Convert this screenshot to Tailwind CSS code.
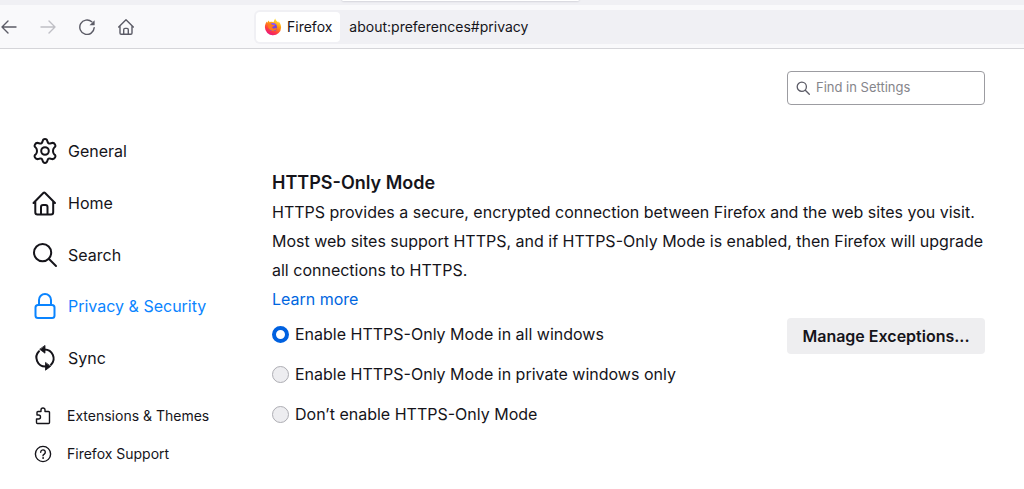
<!doctype html>
<html lang="en">

<head>
    <meta charset="UTF-8">
    <meta name="viewport" content="width=device-width, initial-scale=1.0">
    <title>Settings</title>
    <script src="https://cdn.jsdelivr.net/npm/@tailwindcss/browser@4"></script>
</head>

<body class="min-h-screen overflow-x-hidden bg-white text-[#15141a] font-['Inter','Liberation_Sans',sans-serif]">
    <!-- Tab strip -->
    <div class="h-[5px] bg-[#f0f0f4] pl-[342px]">
        <div class="h-px w-[237px] rounded-b-sm bg-white shadow-[0_0_2px_#8f8f9d]"></div>
    </div>

    <!-- Toolbar -->
    <header class="flex h-11 items-center border-b border-[#d5d5d9] bg-[#f9f9fb]">
        <nav class="flex w-[254px] shrink-0 gap-[23px] pl-px text-[#5b5b66]">
            <button aria-label="Back">
                <svg class="size-4" viewBox="0 0 16 16" fill="none" stroke="currentColor" stroke-width="1.4" stroke-linecap="round" stroke-linejoin="round"><path d="M15 8H1M7 2 1 8l6 6" /></svg>
            </button>
            <button aria-label="Forward" class="text-[#bfbfc5]">
                <svg class="size-4" viewBox="0 0 16 16" fill="none" stroke="currentColor" stroke-width="1.4" stroke-linecap="round" stroke-linejoin="round"><path d="M1 8h14M9 2l6 6-6 6" /></svg>
            </button>
            <button aria-label="Reload">
                <svg class="size-4" viewBox="0 0 16 16" fill="none" stroke="currentColor" stroke-width="1.4" stroke-linecap="round"><path d="M15.2 8.6A7.2 7.2 0 1 1 12.8 2.8" /><path d="M15.6 1.2v4.6a.5.5 0 0 1-.5.5h-4.6z" fill="currentColor" stroke="none" /></svg>
            </button>
            <button aria-label="Home">
                <svg class="size-4" viewBox="0 0 16 16" fill="none" stroke="currentColor" stroke-width="1.4" stroke-linecap="round" stroke-linejoin="round"><path d="M.7 8 8 .8 15.3 8M2 7v7.1a1.2 1.2 0 0 0 1.2 1.2h9.6a1.2 1.2 0 0 0 1.2-1.2V7M5.7 15v-4.3A1.3 1.3 0 0 1 7 9.4h2a1.3 1.3 0 0 1 1.3 1.3V15" /></svg>
            </button>
        </nav>
        <div class="flex h-[34px] min-w-0 flex-1 items-center rounded-l-md bg-[#f0f0f4] pl-[2px] text-sm">
            <button class="flex h-[30px] shrink-0 items-center gap-[5px] rounded bg-white px-2">
                <svg class="size-[18px]" viewBox="0 0 18 18">
                    <defs>
                        <linearGradient id="flame" x1=".8" y1="0" x2=".3" y2="1">
                            <stop offset="0" stop-color="#fff44f" />
                            <stop offset=".4" stop-color="#ff980e" />
                            <stop offset=".75" stop-color="#ff3647" />
                            <stop offset="1" stop-color="#e31587" />
                        </linearGradient>
                    </defs>
                    <path d="M11.2.5c.7 2.3 2.1 2.7 3.2 4.1.2-.6.1-1 0-1.4 1.7 1.6 2.7 3.9 2.7 6.2A8.1 8.1 0 0 1 9 17.300 8.1 8.1 0 0 1 .9 9.300c0-2.300.7-4.200 1.900-5.800 0 .6.1 1 .4 1.300.4-1 1-1.700 1.800-2.200 0 .7.2 1.200.6 1.600 1.200-.5 2.600-.6 3.900 0 .5-1.500.9-2.600 1.700-3.700z" fill="url(#flame)" />
                    <circle cx="9" cy="9.2" r="3.9" fill="#7542e5" />
                    <path d="M4.8 6c1.400-.4 2.600-.2 3.700.7L11 7c-.4 1.200-1.500 1.200-2.500 1.700-.7.6.1 1.800 1.400 1.800 1.200.1 2-.7 3-.4-.6 1.800-2.200 2.900-4.200 2.800C6 12.700 4.200 10.300 4 8.300z" fill="#ff7b1c" />
                    <path d="M7 5.200c2.300-.8 4.800.3 5.600 2.200-1-.8-1.800-.8-2.700-.6L8.400 6.500z" fill="#9059ff" />
                </svg>
                Firefox
            </button>
            <input type="text" aria-label="Address" value="about:preferences#privacy" class="min-w-0 flex-1 px-[9px] outline-none">
        </div>
    </header>

    <div class="flex pt-[22px] pr-[39px] pl-8">
        <!-- Categories -->
        <nav class="w-[240px] shrink-0 pt-[54px]">
            <ul class="text-base">
                <li><a href="#general" class="flex h-[52px] items-center gap-[10px]">
                    <svg class="size-[26px]" viewBox="0 0 26 26" fill="none" stroke="currentColor" stroke-width="2" stroke-linejoin="round">
                        <circle cx="13" cy="13" r="3.8" />
                        <path d="M10.6 3.3Q11 1 13 1T15.4 3.3C15.8 5.3 17 6 19 5.2Q21.8 4.2 23 6.4T22.2 9.6C20.6 11.2 20.6 14.8 22.2 16.4Q24.2 17.4 23 19.6T19 20.8C17 20 15.8 20.7 15.4 22.7Q15 25 13 25T10.6 22.7C10.2 20.7 9 20 7 20.8Q4.2 21.8 3 19.6T3.8 16.4C5.4 14.8 5.4 11.2 3.8 9.6Q1.8 8.6 3 6.4T7 5.2C9 6 10.2 5.3 10.6 3.3Z" />
                    </svg>
                    General</a></li>
                <li><a href="#home" class="flex h-[52px] items-center gap-[10px]">
                    <svg class="size-[26px]" viewBox="0 0 26 26" fill="none" stroke="currentColor" stroke-width="2" stroke-linecap="round" stroke-linejoin="round"><path d="M1.500 13 11.300 3a1.300 1.300 0 0 1 1.800 0l9.900 10M3.300 11.500v10.700a2.200 2.200 0 0 0 2.200 2.200h13.500a2.200 2.200 0 0 0 2.200-2.200V11.500M9 24v-7a2 2 0 0 1 2-2h2.500a2 2 0 0 1 2 2v7" /></svg>
                    Home</a></li>
                <li><a href="#search" class="flex h-[51px] items-center gap-[10px]">
                    <svg class="size-[26px]" viewBox="0 0 26 26" fill="none" stroke="currentColor" stroke-width="2" stroke-linecap="round"><circle cx="10.6" cy="10.6" r="8.6" /><path d="m17 17 7 7" /></svg>
                    Search</a></li>
                <li><a href="#privacy" class="flex h-[52px] items-center gap-[10px] text-[#0a84ff]">
                    <svg class="size-[26px]" viewBox="0 0 26 26" fill="none" stroke="currentColor" stroke-width="2" stroke-linecap="round"><rect x="3.5" y="12" width="19" height="13" rx="2.500" /><path d="M7 12V7a6 6 0 0 1 12 0v5" /></svg>
                    Privacy &amp; Security</a></li>
                <li><a href="#sync" class="flex h-[51px] items-center gap-[10px]">
                    <svg class="size-[26px]" viewBox="0 0 26 26" fill="none" stroke="currentColor" stroke-width="2" stroke-linecap="round"><path d="M7 6.200A9 9 0 0 0 13.500 21.500M12.500 4.500A9 9 0 0 1 19 19.800" /><path d="M13 .8v7.400L8 4.500zM13.500 17.800v7.400l5-3.700z" fill="currentColor" stroke-width=".8" stroke-linejoin="round" /></svg>
                    Sync</a></li>
            </ul>
            <ul class="mt-[14px] text-sm">
                <li><a href="#addons" class="flex h-[38px] items-center gap-[15px] pl-[2px]">
                    <svg class="size-[18px]" viewBox="0 0 18 18" fill="none" stroke="currentColor" stroke-width="1.4" stroke-linejoin="round"><path d="M3.500 16.500h11a1 1 0 0 0 1-1V5.500a1 1 0 0 0-1-1h-3.500V3a2 2 0 0 0-4 0v1.500H4a1 1 0 0 0-1 1V8h1.500a2 2 0 0 1 0 4H2.500v3.500a1 1 0 0 0 1 1z" /></svg>
                    Extensions &amp; Themes</a></li>
                <li><a href="#support" class="flex h-[38px] items-center gap-[15px] pl-[2px]">
                    <svg class="size-[18px]" viewBox="0 0 18 18" fill="none" stroke="currentColor" stroke-width="1.4" stroke-linecap="round"><circle cx="9" cy="9" r="7.6" /><path d="M6.700 7.200a2.300 2.300 0 1 1 3.600 1.900c-.8.5-1.300.8-1.300 1.600" /><circle cx="9" cy="13" r=".4" fill="currentColor" stroke-width="1" /></svg>
                    Firefox Support</a></li>
            </ul>
        </nav>

        <!-- Pane -->
        <main class="min-w-0 flex-1">
            <label class="ml-auto flex h-[34px] w-[198px] items-center gap-[6px] rounded border border-[#9c9ca1] px-2">
                <svg class="size-[14px] shrink-0 text-[#5b5b66]" viewBox="0 0 14 14" fill="none" stroke="currentColor" stroke-width="1.3" stroke-linecap="round"><circle cx="5.8" cy="5.8" r="4.6" /><path d="m9.300 9.300 4 4" /></svg>
                <input type="search" aria-label="Find in Settings" placeholder="Find in Settings" class="w-full min-w-0 text-[13px] outline-none placeholder:text-[#85858b]">
            </label>

            <h1 class="mt-[62px] text-lg leading-[31px] font-semibold">HTTPS-Only Mode</h1>
            <p class="text-base leading-[29px]">HTTPS provides a secure, encrypted connection between Firefox and the web sites you visit. Most web sites support HTTPS, and if HTTPS-Only Mode is enabled, then Firefox will upgrade all connections to HTTPS.</p>
            <a href="#learn" class="block w-fit text-base leading-[29px] text-[#0066e0]">Learn more</a>

            <div class="mt-1 flex items-start justify-between text-base">
                <fieldset class="flex flex-col gap-4 pt-1">
                    <label class="flex h-6 items-center gap-[6px]">
                        <input type="radio" name="mode" checked class="size-[17px] appearance-none rounded-full border border-[#adadb3] bg-[#ededf0] checked:border-4 checked:border-[#0061e0] checked:bg-white">
                        Enable HTTPS-Only Mode in all windows
                    </label>
                    <label class="flex h-6 items-center gap-[6px]">
                        <input type="radio" name="mode" class="size-[17px] appearance-none rounded-full border border-[#adadb3] bg-[#ededf0] checked:border-4 checked:border-[#0061e0] checked:bg-white">
                        Enable HTTPS-Only Mode in private windows only
                    </label>
                    <label class="flex h-6 items-center gap-[6px]">
                        <input type="radio" name="mode" class="size-[17px] appearance-none rounded-full border border-[#adadb3] bg-[#ededf0] checked:border-4 checked:border-[#0061e0] checked:bg-white">
                        Don’t enable HTTPS-Only Mode
                    </label>
                </fieldset>
                <button class="h-9 w-[198px] rounded bg-[#eeeef0] text-base font-semibold">Manage Exceptions...</button>
            </div>
        </main>
    </div>
</body>

</html>
